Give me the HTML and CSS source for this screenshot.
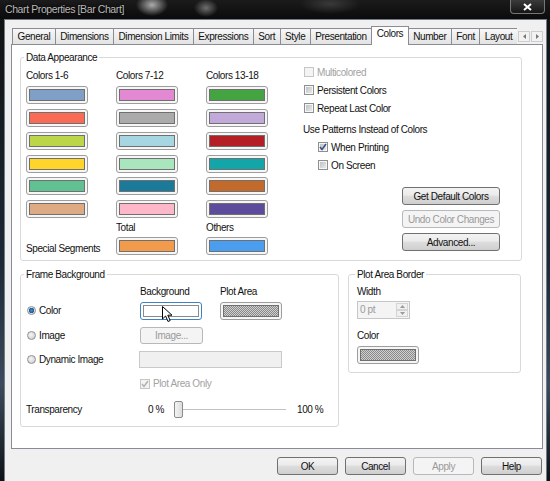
FILE: index.html
```html
<!DOCTYPE html>
<html lang="en">
<head>
    <meta charset="UTF-8">
    <title>Chart Properties [Bar Chart]</title>
    <link rel="stylesheet" href="styles.css">
</head>
<body>

    <!-- Title bar -->
    <div class="titlebar">
        <span class="title">Chart Properties [Bar Chart]</span>
        <span class="close-btn">
            <svg width="9" height="8" viewBox="0 0 9 8"><path d="M1 1 L8 7 M8 1 L1 7" stroke="#fff" stroke-width="2"/></svg>
        </span>
    </div>

    <div class="dialog">

        <!-- Tabs -->
        <div class="tab-strip">
            <div class="tabs">
                <div class="tab">General</div>
                <div class="tab">Dimensions</div>
                <div class="tab">Dimension Limits</div>
                <div class="tab">Expressions</div>
                <div class="tab">Sort</div>
                <div class="tab">Style</div>
                <div class="tab">Presentation</div>
                <div class="tab active">Colors</div>
                <div class="tab">Number</div>
                <div class="tab">Font</div>
                <div class="tab last">Layout</div>
            </div>
            <div class="tab-arrows">
                <span class="arrow"><svg width="3" height="5" viewBox="0 0 3 5"><path d="M3 0 L0 2.5 L3 5 Z" fill="#777"/></svg></span>
                <span class="arrow"><svg width="3" height="5" viewBox="0 0 3 5"><path d="M0 0 L3 2.5 L0 5 Z" fill="#777"/></svg></span>
            </div>
        </div>

        <div class="panel">

            <!-- Data Appearance -->
            <fieldset class="group">
                <legend>Data Appearance</legend>
                <div class="data-body">
                    <div class="swatch-grid">
                        <span>Colors 1-6</span>
                        <span>Colors 7-12</span>
                        <span>Colors 13-18</span>

                        <div class="swatch"><div class="chip c1"></div></div>
                        <div class="swatch"><div class="chip c7"></div></div>
                        <div class="swatch"><div class="chip c13"></div></div>

                        <div class="swatch"><div class="chip c2"></div></div>
                        <div class="swatch"><div class="chip c8"></div></div>
                        <div class="swatch"><div class="chip c14"></div></div>

                        <div class="swatch"><div class="chip c3"></div></div>
                        <div class="swatch"><div class="chip c9"></div></div>
                        <div class="swatch"><div class="chip c15"></div></div>

                        <div class="swatch"><div class="chip c4"></div></div>
                        <div class="swatch"><div class="chip c10"></div></div>
                        <div class="swatch"><div class="chip c16"></div></div>

                        <div class="swatch"><div class="chip c5"></div></div>
                        <div class="swatch"><div class="chip c11"></div></div>
                        <div class="swatch"><div class="chip c17"></div></div>

                        <div class="swatch"><div class="chip c6"></div></div>
                        <div class="swatch"><div class="chip c12"></div></div>
                        <div class="swatch"><div class="chip c18"></div></div>

                        <span></span>
                        <span class="small-label">Total</span>
                        <span class="small-label">Others</span>

                        <span class="special-label">Special Segments</span>
                        <div class="swatch"><div class="chip total"></div></div>
                        <div class="swatch"><div class="chip others"></div></div>
                    </div>

                    <div class="options">
                        <div class="check-row disabled"><span class="check"></span>Multicolored</div>
                        <div class="check-row"><span class="check"></span>Persistent Colors</div>
                        <div class="check-row"><span class="check"></span>Repeat Last Color</div>
                        <div class="check-row plain">Use Patterns Instead of Colors</div>
                        <div class="check-row sub">
                            <span class="check"><svg width="8" height="8" viewBox="0 0 8 8"><path d="M1 4 L3 6.5 L7 1" stroke="#3e5286" stroke-width="1.6" fill="none"/></svg></span>When Printing
                        </div>
                        <div class="check-row sub"><span class="check"></span>On Screen</div>

                        <div class="side-btns">
                            <button class="btn wide">Get Default Colors</button>
                            <button class="btn wide off">Undo Color Changes</button>
                            <button class="btn wide">Advanced...</button>
                        </div>
                    </div>
                </div>
            </fieldset>

            <div class="lower">

                <!-- Frame Background -->
                <fieldset class="group frame-group">
                    <legend>Frame Background</legend>

                    <div class="fb-row fb-head">
                        <span></span>
                        <span>Background</span>
                        <span>Plot Area</span>
                    </div>

                    <div class="fb-row fb-color">
                        <span class="radio-label"><span class="radio on"></span>Color</span>
                        <div class="swatch focus">
                            <div class="chip blank"></div>
                            <svg class="cursor" width="11" height="17" viewBox="0 0 11 17">
                                <path d="M0.5 0.5 L0.5 13 L3.6 10 L6 15.5 L8.2 14.5 L5.8 9.2 L10 9.2 Z" fill="#fff" stroke="#000" stroke-width="1"/>
                            </svg>
                        </div>
                        <div class="swatch"><div class="chip pattern"></div></div>
                    </div>

                    <div class="fb-row fb-image">
                        <span class="radio-label"><span class="radio"></span>Image</span>
                        <button class="btn small off">Image...</button>
                    </div>

                    <div class="fb-row fb-dyn">
                        <span class="radio-label"><span class="radio"></span>Dynamic Image</span>
                        <div class="field"></div>
                    </div>

                    <div class="fb-row fb-only">
                        <span></span>
                        <span class="check-row disabled plot-only">
                            <span class="check"><svg width="8" height="8" viewBox="0 0 8 8"><path d="M1 4 L3 6.5 L7 1" stroke="#b4b4b4" stroke-width="1.6" fill="none"/></svg></span>Plot Area Only
                        </span>
                    </div>

                    <div class="fb-row fb-trans">
                        <span>Transparency</span>
                        <span class="pct-min">0 %</span>
                        <div class="slider"><span class="thumb"></span></div>
                        <span class="pct-max">100 %</span>
                    </div>
                </fieldset>

                <!-- Plot Area Border -->
                <fieldset class="group border-group">
                    <legend>Plot Area Border</legend>
                    <div class="pb-label">Width</div>
                    <div class="spin">
                        <span class="spin-val">0 pt</span>
                        <span class="spin-btns">
                            <span><svg width="5" height="3" viewBox="0 0 5 3"><path d="M0 3 L2.5 0 L5 3 Z" fill="#9a9a9a"/></svg></span>
                            <span><svg width="5" height="3" viewBox="0 0 5 3"><path d="M0 0 L2.5 3 L5 0 Z" fill="#9a9a9a"/></svg></span>
                        </span>
                    </div>
                    <div class="pb-label pb-color">Color</div>
                    <div class="swatch pb-swatch"><div class="chip pattern"></div></div>
                </fieldset>

            </div>
        </div>

        <!-- Dialog buttons -->
        <div class="footer">
            <button class="btn">OK</button>
            <button class="btn">Cancel</button>
            <button class="btn off">Apply</button>
            <button class="btn">Help</button>
        </div>
    </div>

</body>
</html>
```

FILE: styles.css
```css
* {
    box-sizing: border-box;
}

body {
    margin: 0;
    width: 550px;
    height: 481px;
    overflow: hidden;
    display: flex;
    flex-direction: column;
    font-family: "Liberation Sans", Arial, sans-serif;
    font-size: 10px;
    letter-spacing: -0.4px;
    line-height: 13px;
    color: #111;
    background: linear-gradient(#111, #1c2836 55%, #3b4a5c 80%, #0e1216);
}

/* ---------- title bar ---------- */

.titlebar {
    height: 19px;
    flex: none;
    display: flex;
    justify-content: space-between;
    background:
        radial-gradient(ellipse 16px 11px at 152px 5px, rgba(235, 235, 235, 0.7), transparent),
        radial-gradient(ellipse 12px 9px at 206px 8px, rgba(220, 220, 220, 0.45), transparent),
        radial-gradient(ellipse 30px 10px at 330px 4px, rgba(120, 120, 120, 0.35), transparent),
        linear-gradient(#1b1b1b, #0b0b0b);
}

.title {
    padding: 3px 0 0 5px;
    font-size: 10.5px;
    color: #b8b8b8;
    text-shadow: 0 0 3px #000;
}

.close-btn {
    width: 35px;
    height: 14px;
    margin-right: 5px;
    display: flex;
    align-items: center;
    justify-content: center;
    border: 1px solid #777;
    border-top: none;
    border-radius: 0 0 4px 4px;
    background: linear-gradient(#3b3b3b, #161616);
}

/* ---------- dialog body ---------- */

.dialog {
    flex: 1;
    margin: 0 3px 0 4px;
    padding: 6px 3px 0 6px;
    background: #f0f0f0;
    border: 1px solid #6f7b88;
    border-bottom: none;
}

.tab-strip {
    display: flex;
    align-items: flex-start;
    height: 18px;
    padding-left: 1px;
}

.tabs {
    display: flex;
    align-items: flex-end;
    width: 505px;
    height: 19px;
    overflow: hidden;
    position: relative;
    z-index: 1;
}

.tab {
    flex: none;
    height: 16px;
    margin-bottom: 1px;
    padding: 0 4.5px;
    margin-right: -1px;
    line-height: 15px;
    white-space: nowrap;
    border: 1px solid #898c95;
    border-bottom: none;
    background: linear-gradient(#f7f7f7, #e3e3e3);
}

.tab.active {
    height: 19px;
    margin-bottom: 0;
    line-height: 14px;
    background: #fff;
    position: relative;
    z-index: 1;
}

.tab.last {
    flex: 1 1 0;
    min-width: 0;
    overflow: hidden;
    padding-right: 0;
    border-right: none;
}

.tab-arrows {
    display: flex;
    gap: 1px;
    margin: 5px 0 0 1px;
}

.arrow {
    width: 12px;
    height: 11px;
    display: flex;
    align-items: center;
    justify-content: center;
    border: 1px solid #cdcdcd;
    background: #f2f2f2;
}

.panel {
    height: 405px;
    padding: 6px 20px 0 8px;
    border: 1px solid #898c95;
    background: #fff;
}

/* ---------- group boxes ---------- */

.group {
    margin: 0;
    min-width: 0;
    padding: 4.5px 5px 5px;
    border: 1px solid #d9d9d9;
    border-radius: 3px;
}

.group legend {
    padding: 0 2px;
    margin-left: -2px;
    line-height: 13px;
}

.data-body {
    display: flex;
}

.swatch-grid {
    width: 277px;
    flex: none;
    display: grid;
    grid-template-columns: 90px 90px 90px;
    grid-template-rows: 13px repeat(6, 18px) 9px 18px;
    row-gap: 4.8px;
}

.small-label {
    line-height: 9px;
}

.special-label {
    align-self: end;
    white-space: nowrap;
}

.swatch {
    width: 62px;
    height: 18px;
    padding: 2px;
    border: 1px solid #9d9d9d;
    border-radius: 3px;
    background: #f6f6f6;
}

.chip {
    height: 100%;
    border: 1px solid #707070;
}

.c1 { background: #7f9fc7; }
.c2 { background: #fa6b56; }
.c3 { background: #bcd64a; }
.c4 { background: #ffd52c; }
.c5 { background: #61c192; }
.c6 { background: #deaa84; }
.c7 { background: #e388d2; }
.c8 { background: #ababab; }
.c9 { background: #a6d6e2; }
.c10 { background: #aae6bd; }
.c11 { background: #1b7a9a; }
.c12 { background: #fdb7c8; }
.c13 { background: #43a441; }
.c14 { background: #c1a9d9; }
.c15 { background: #b31f25; }
.c16 { background: #13a6a8; }
.c17 { background: #c26a2c; }
.c18 { background: #5d4b9b; }
.total { background: #f29b4c; }
.others { background: #4b9def; }

.chip.blank {
    background: #fff;
    border-color: #8a8a8a;
}

.chip.pattern {
    background: repeating-conic-gradient(#8a8a8a 0 25%, #d0d0d0 0 50%) 0 0 / 2px 2px;
}

.swatch.focus {
    position: relative;
    border-color: #3c83c4;
    background: #fff;
}

.cursor {
    position: absolute;
    left: 21px;
    top: 3px;
}

/* ---------- checkboxes & radios ---------- */

.options {
    display: flex;
    flex-direction: column;
    margin-top: -5.5px;
}

.check-row {
    height: 18px;
    display: flex;
    align-items: center;
    gap: 3px;
    padding-left: 1px;
    white-space: nowrap;
}

.check-row.plain {
    margin-top: 3px;
    padding-left: 0;
}

.check-row.sub {
    padding-left: 15px;
}

.check {
    width: 10px;
    height: 10px;
    flex: none;
    display: flex;
    align-items: center;
    justify-content: center;
    border: 1px solid #8e8f8f;
    background: linear-gradient(135deg, #b7bbc1, #efefef);
    box-shadow: inset 0 0 0 1px #f6f6f6;
}

.check-row.disabled {
    color: #a2a2a2;
}

.check-row.disabled .check {
    border-color: #c6c6c6;
    background: #f4f4f4;
    box-shadow: none;
}

.radio-label {
    display: flex;
    align-items: center;
    gap: 3px;
    padding-left: 1px;
    white-space: nowrap;
}

.radio {
    width: 9px;
    height: 9px;
    flex: none;
    border-radius: 50%;
    border: 1px solid #8e8f8f;
    background: radial-gradient(circle at 40% 40%, #f6f6f6, #c4c8ce);
}

.radio.on {
    background: radial-gradient(circle, #3c8fd6 0, #1d5a97 2.5px, #e4e6e9 3px);
}

/* ---------- buttons ---------- */

.btn {
    width: 61px;
    height: 18px;
    padding: 0;
    font: inherit;
    letter-spacing: inherit;
    white-space: nowrap;
    color: #111;
    border: 1px solid #707070;
    border-radius: 3px;
    background: linear-gradient(#f3f3f3 0, #ebebeb 45%, #dddddd 50%, #cfcfcf 100%);
}

.btn.wide {
    width: 98px;
}

.btn.small {
    width: 63px;
    height: 17px;
}

.btn.off {
    color: #9a9a9a;
    border-color: #b5b9bc;
    background: #f4f4f4;
}

.side-btns {
    display: flex;
    flex-direction: column;
    gap: 5px;
    margin: 13px 0 0 99px;
}

/* ---------- lower groups ---------- */

.lower {
    display: flex;
    align-items: flex-start;
    gap: 9px;
    margin-top: 7px;
}

.frame-group {
    width: 319px;
    padding-bottom: 8px;
}

.fb-row {
    display: grid;
    grid-template-columns: 114px 80px 80px;
    align-items: center;
}

.fb-head { height: 13px; }
.fb-color { height: 18px; margin-top: 3.5px; }
.fb-image { height: 17px; margin-top: 7px; }
.fb-dyn { height: 17px; margin-top: 7px; }
.fb-only { height: 13px; margin-top: 9.5px; }

.fb-trans {
    height: 17px;
    margin-top: 10.5px;
    grid-template-columns: 114px 34px 112px auto;
}

.field {
    grid-column: 2 / 4;
    width: 143px;
    height: 17px;
    margin-left: -1px;
    border: 1px solid #c9c9c9;
    background: #f0f0f0;
}

.plot-only {
    grid-column: 2 / 4;
    height: 13px;
    padding-left: 0;
}

.pct-min {
    padding-left: 8px;
}

.pct-max {
    padding-left: 11px;
}

.slider {
    height: 17px;
    display: flex;
    background: linear-gradient(#c2c2c2, #c2c2c2) center / 100% 1px no-repeat;
}

.thumb {
    width: 9px;
    height: 17px;
    border: 1px solid #8c8c8c;
    border-radius: 2px;
    background: linear-gradient(90deg, #f4f4f4, #dcdcdc);
}

.border-group {
    width: 173px;
    padding: 4.5px 8px 8px;
}

.pb-label {
    height: 13px;
}

.pb-color {
    margin-top: 10.5px;
}

.spin {
    width: 53px;
    height: 18px;
    margin-top: 2.5px;
    display: flex;
    padding: 1px;
    color: #9b9b9b;
    border: 1px solid #c6c6c6;
    background: #f4f4f4;
}

.spin-val {
    flex: 1;
    padding-left: 1px;
    line-height: 14px;
}

.spin-btns {
    width: 12px;
    display: flex;
    flex-direction: column;
}

.spin-btns span {
    flex: 1;
    display: flex;
    align-items: center;
    justify-content: center;
    border: 1px solid #d4d4d4;
    background: #f0f0f0;
}

.pb-swatch {
    margin-top: 3.5px;
}

/* ---------- footer ---------- */

.footer {
    display: flex;
    justify-content: flex-end;
    gap: 7px;
    padding: 8px 1px 0 0;
}
```
